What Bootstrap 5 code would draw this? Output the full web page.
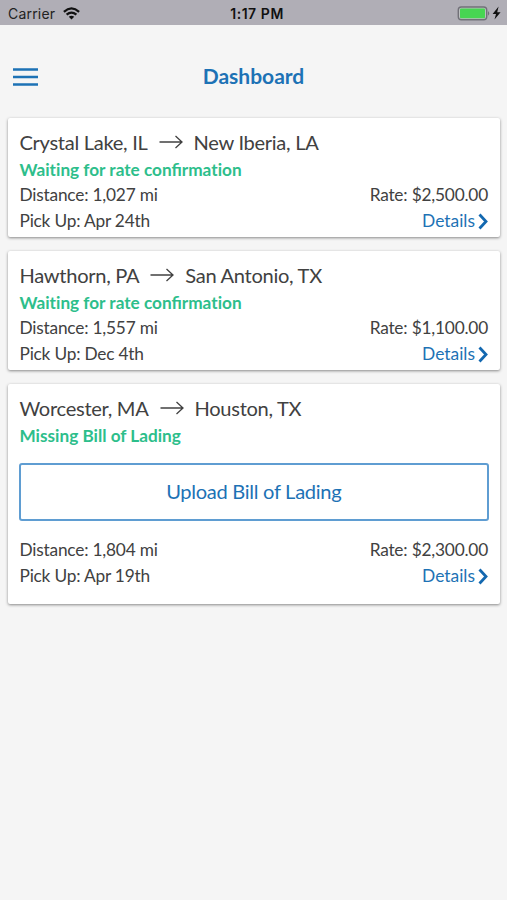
<!DOCTYPE html>
<html lang="en">
<head>
<meta charset="utf-8">
<meta name="viewport" content="width=device-width, initial-scale=1">
<title>Dashboard</title>
<link href="https://cdn.jsdelivr.net/npm/bootstrap@5.3.0/dist/css/bootstrap.min.css" rel="stylesheet">
<style>
body{background:#f5f5f5;color:#414141;font-family:Lato,sans-serif;font-size:17.3px;line-height:26px;min-height:900px}
.status-bar{height:25px;padding-top:2px;background:#b0aeb6;color:#222;font-family:Inter,sans-serif;font-size:14px;line-height:23px}
.status-side{flex:1 1 0}
.carrier{letter-spacing:.2px}
.clock{font-size:14px;font-weight:600;color:#111;letter-spacing:.55px;padding-left:3px}
.app-header{height:93px;padding:9px 12px 0}
.app-title{font-size:21px;line-height:26px;color:#1d72b5;font-weight:700}
.brand-blue{color:#1d72b5}
.menu-btn{width:26px;margin-top:1px}
.loads{gap:14px;padding:0 7px 0 8px}
.load-card{border:0;border-radius:2px;box-shadow:0 1px 3px rgba(0,0,0,.45);color:inherit;height:119px;padding:10px 12px 0 11.5px}
.load-card.tall{height:220px}
.route{font-size:20.1px;line-height:28px;gap:11px;letter-spacing:-.3px}
.load-state{color:#2dbe8b;font-size:17.2px;font-weight:700;line-height:26px;margin:1px 0 -1px}
.no-liga{font-variant-ligatures:none}
.figures{letter-spacing:-.2px}
.upload-btn,.upload-btn:hover{height:58px;margin:15px -.5px 16px;padding:0 0 1px;border:2px solid #5f9dd2;border-radius:3px;color:#1d72b5;background:#fff;font-size:20.1px;letter-spacing:-.3px}
.details{gap:3px;font-size:17.4px;letter-spacing:0}
</style>
<script src="https://cdn.jsdelivr.net/npm/bootstrap@5.3.0/dist/js/bootstrap.bundle.min.js"></script>
</head>
<body>
<svg class="d-none">
<symbol id="arrow" viewBox="0 0 24 14"><path d="M.5 7H23M16.5 1L23 7L16.5 13" fill="none" stroke="#414141" stroke-width="1.3"/></symbol>
<symbol id="chevron" viewBox="0 0 10 17"><path d="M1.5 1.5L8 8.5L1.5 15.5" fill="none" stroke="#1368b0" stroke-width="2.8"/></symbol>
</svg>
<div class="status-bar d-flex align-items-center">
  <div class="status-side d-flex align-items-center ps-2"><span class="carrier">Carrier</span>
    <svg class="ms-2" width="17" height="13" viewBox="0 0 17 13" fill="none" stroke="#111" stroke-width="2.2"><path d="M.9 4.8Q8.5-1.9 16.1 4.8M3.6 7.7Q8.5 3.4 13.4 7.7"/><path d="M5.8 9.8Q8.5 7.6 11.2 9.8L8.5 12.6Z" fill="#111" stroke="none"/></svg>
  </div>
  <div class="clock">1:17 PM</div>
  <div class="status-side d-flex align-items-center justify-content-end pe-1">
    <svg width="46" height="16" viewBox="0 0 46 16"><rect x="1.3" y="1" width="28.4" height="12.8" rx="3" fill="#bcc0c0" stroke="#717078" stroke-width="1.4"/><rect x="3" y="2.6" width="25" height="9.6" rx="1" fill="#47d552"/><path d="M31 5Q33.5 7.4 31 9.8Z" fill="#717078"/><path d="M41.6 .6L35.6 8H39L37.5 13.6L43.6 6.2H40.2Z" fill="#111"/></svg>
  </div>
</div>
<header class="app-header d-flex align-items-center">
  <div class="status-side"><button class="menu-btn btn p-0 border-0 d-flex" aria-label="Menu"><svg width="26" height="20" viewBox="0 0 26 20" stroke="#1d72b5" stroke-width="2.6"><path d="M1 2.5H26M1 10H26M1 17.5H26"/></svg></button></div>
  <h1 class="app-title m-0">Dashboard</h1>
  <div class="status-side"></div>
</header>
<main class="loads d-flex flex-column">
  <article class="card load-card">
    <div class="route d-flex align-items-center"><span>Crystal Lake, IL</span><svg width="24" height="14"><use href="#arrow"/></svg><span>New Iberia, LA</span></div>
    <div class="load-state">Wai<span class="no-liga">ti</span>ng for rate confirma<span class="no-liga">ti</span>on</div>
    <div class="figures d-flex justify-content-between"><span>Distance: 1,027 mi</span><span>Rate: $2,500.00</span></div>
    <div class="figures d-flex justify-content-between"><span>Pick Up: Apr 24th</span><a class="details brand-blue text-decoration-none d-flex align-items-center" href="#">Details<svg width="10" height="17"><use href="#chevron"/></svg></a></div>
  </article>
  <article class="card load-card">
    <div class="route d-flex align-items-center"><span>Hawthorn, PA</span><svg width="24" height="14"><use href="#arrow"/></svg><span>San Antonio, TX</span></div>
    <div class="load-state">Wai<span class="no-liga">ti</span>ng for rate confirma<span class="no-liga">ti</span>on</div>
    <div class="figures d-flex justify-content-between"><span>Distance: 1,557 mi</span><span>Rate: $1,100.00</span></div>
    <div class="figures d-flex justify-content-between"><span>Pick Up: Dec 4th</span><a class="details brand-blue text-decoration-none d-flex align-items-center" href="#">Details<svg width="10" height="17"><use href="#chevron"/></svg></a></div>
  </article>
  <article class="card load-card tall">
    <div class="route d-flex align-items-center"><span>Worcester, MA</span><svg width="24" height="14"><use href="#arrow"/></svg><span>Houston, TX</span></div>
    <div class="load-state">Missing Bill of Lading</div>
    <button class="btn upload-btn">Upload Bill of Lading</button>
    <div class="figures d-flex justify-content-between"><span>Distance: 1,804 mi</span><span>Rate: $2,300.00</span></div>
    <div class="figures d-flex justify-content-between"><span>Pick Up: Apr 19th</span><a class="details brand-blue text-decoration-none d-flex align-items-center" href="#">Details<svg width="10" height="17"><use href="#chevron"/></svg></a></div>
  </article>
</main>
</body>
</html>
